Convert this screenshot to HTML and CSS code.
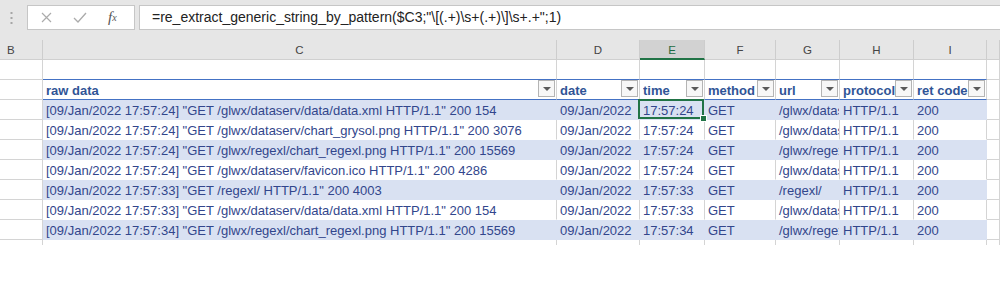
FILE: index.html
```html
<!DOCTYPE html>
<html lang="en">
<head>
    <meta charset="UTF-8">
    <title>Book1 - Excel</title>
    <link rel="stylesheet" href="styles.css">
</head>
<body>
    <div class="formula-bar">
        <div class="grip">
            <svg width="3" height="12" viewBox="0 0 3 12"><rect x="0.5" y="0" width="2" height="2" fill="#a6a6a6"/><rect x="0.5" y="5" width="2" height="2" fill="#a6a6a6"/><rect x="0.5" y="10" width="2" height="2" fill="#a6a6a6"/></svg>
        </div>
        <div class="fx-box">
            <span class="btn cancel"><svg width="11" height="11" viewBox="0 0 11 11"><path d="M1 1 L10 10 M10 1 L1 10" stroke="#ababab" stroke-width="1.2" fill="none"/></svg></span>
            <span class="btn enter"><svg width="14" height="11" viewBox="0 0 14 11"><path d="M1 6 L5 10 L13 1" stroke="#ababab" stroke-width="1.3" fill="none"/></svg></span>
            <span class="btn fx"><i>f</i><sub>x</sub></span>
        </div>
        <div class="formula">=re_extract_generic_string_by_pattern($C3;"\[(.+)\s+(.+)\]\s+.+";1)</div>
    </div>

    <div class="sheet">
        <div class="row col-heads">
            <div class="cell head-b">B</div>
            <div class="cell">C</div>
            <div class="cell">D</div>
            <div class="cell selected-col">E</div>
            <div class="cell">F</div>
            <div class="cell">G</div>
            <div class="cell">H</div>
            <div class="cell">I</div>
            <div class="cell"></div>
        </div>

        <div class="row above-table">
            <div class="cell"></div>
            <div class="cell"></div>
            <div class="cell"></div>
            <div class="cell"></div>
            <div class="cell"></div>
            <div class="cell"></div>
            <div class="cell"></div>
            <div class="cell"></div>
            <div class="cell"></div>
        </div>

        <div class="row table-head">
            <div class="cell"></div>
            <div class="cell th"><span class="label">raw data</span><span class="filter"></span></div>
            <div class="cell th"><span class="label">date</span><span class="filter"></span></div>
            <div class="cell th"><span class="label">time</span><span class="filter"></span></div>
            <div class="cell th"><span class="label">method</span><span class="filter"></span></div>
            <div class="cell th"><span class="label">url</span><span class="filter"></span></div>
            <div class="cell th"><span class="label">protocol</span><span class="filter"></span></div>
            <div class="cell th"><span class="label">ret code</span><span class="filter"></span></div>
            <div class="cell"></div>
        </div>

        <div class="row band">
            <div class="cell"></div>
            <div class="cell td">[09/Jan/2022 17:57:24] "GET /glwx/dataserv/data/data.xml HTTP/1.1" 200 154</div>
            <div class="cell td">09/Jan/2022</div>
            <div class="cell td active">17:57:24<span class="fill-handle"></span></div>
            <div class="cell td">GET</div>
            <div class="cell td">/glwx/dataserv/data/data.xml</div>
            <div class="cell td">HTTP/1.1</div>
            <div class="cell td">200</div>
            <div class="cell"></div>
        </div>

        <div class="row">
            <div class="cell"></div>
            <div class="cell td">[09/Jan/2022 17:57:24] "GET /glwx/dataserv/chart_grysol.png HTTP/1.1" 200 3076</div>
            <div class="cell td">09/Jan/2022</div>
            <div class="cell td">17:57:24</div>
            <div class="cell td">GET</div>
            <div class="cell td">/glwx/dataserv/chart_grysol.png</div>
            <div class="cell td">HTTP/1.1</div>
            <div class="cell td">200</div>
            <div class="cell"></div>
        </div>

        <div class="row band">
            <div class="cell"></div>
            <div class="cell td">[09/Jan/2022 17:57:24] "GET /glwx/regexl/chart_regexl.png HTTP/1.1" 200 15569</div>
            <div class="cell td">09/Jan/2022</div>
            <div class="cell td">17:57:24</div>
            <div class="cell td">GET</div>
            <div class="cell td">/glwx/regexl/chart_regexl.png</div>
            <div class="cell td">HTTP/1.1</div>
            <div class="cell td">200</div>
            <div class="cell"></div>
        </div>

        <div class="row">
            <div class="cell"></div>
            <div class="cell td">[09/Jan/2022 17:57:24] "GET /glwx/dataserv/favicon.ico HTTP/1.1" 200 4286</div>
            <div class="cell td">09/Jan/2022</div>
            <div class="cell td">17:57:24</div>
            <div class="cell td">GET</div>
            <div class="cell td">/glwx/dataserv/favicon.ico</div>
            <div class="cell td">HTTP/1.1</div>
            <div class="cell td">200</div>
            <div class="cell"></div>
        </div>

        <div class="row band">
            <div class="cell"></div>
            <div class="cell td">[09/Jan/2022 17:57:33] "GET /regexl/ HTTP/1.1" 200 4003</div>
            <div class="cell td">09/Jan/2022</div>
            <div class="cell td">17:57:33</div>
            <div class="cell td">GET</div>
            <div class="cell td">/regexl/</div>
            <div class="cell td">HTTP/1.1</div>
            <div class="cell td">200</div>
            <div class="cell"></div>
        </div>

        <div class="row">
            <div class="cell"></div>
            <div class="cell td">[09/Jan/2022 17:57:33] "GET /glwx/dataserv/data/data.xml HTTP/1.1" 200 154</div>
            <div class="cell td">09/Jan/2022</div>
            <div class="cell td">17:57:33</div>
            <div class="cell td">GET</div>
            <div class="cell td">/glwx/dataserv/data/data.xml</div>
            <div class="cell td">HTTP/1.1</div>
            <div class="cell td">200</div>
            <div class="cell"></div>
        </div>

        <div class="row band">
            <div class="cell"></div>
            <div class="cell td">[09/Jan/2022 17:57:34] "GET /glwx/regexl/chart_regexl.png HTTP/1.1" 200 15569</div>
            <div class="cell td">09/Jan/2022</div>
            <div class="cell td">17:57:34</div>
            <div class="cell td">GET</div>
            <div class="cell td">/glwx/regexl/chart_regexl.png</div>
            <div class="cell td">HTTP/1.1</div>
            <div class="cell td">200</div>
            <div class="cell"></div>
        </div>

        <div class="row stub">
            <div class="cell"></div>
            <div class="cell"></div>
            <div class="cell"></div>
            <div class="cell"></div>
            <div class="cell"></div>
            <div class="cell"></div>
            <div class="cell"></div>
            <div class="cell"></div>
            <div class="cell"></div>
        </div>
    </div>
</body>
</html>
```

FILE: styles.css
```css
body {
    margin: 0;
    width: 1000px;
    height: 292px;
    overflow: hidden;
    background: #fff;
    font-family: "Liberation Sans", Arial, sans-serif;
}

/* formula bar */
.formula-bar {
    height: 40px;
    padding-top: 5px;
    box-sizing: border-box;
    background: #e6e6e6;
    display: flex;
    align-items: flex-start;
}
.grip {
    width: 27px;
    height: 25px;
    padding-left: 10px;
    box-sizing: border-box;
    display: flex;
    align-items: center;
}
.fx-box {
    width: 108px;
    height: 25px;
    box-sizing: border-box;
    background: #fff;
    border: 1px solid #c6c6c6;
    display: flex;
    align-items: center;
}
.btn {
    display: flex;
    align-items: center;
    justify-content: center;
}
.cancel {
    width: 14px;
    margin-left: 11px;
}
.enter {
    width: 16px;
    margin-left: 19px;
}
.fx {
    margin-left: 20px;
    font-family: "Liberation Serif", "Times New Roman", serif;
    font-size: 15px;
    color: #555;
}
.fx sub {
    font-size: 10px;
    font-style: italic;
    vertical-align: -1px;
}
.formula {
    flex: 1;
    height: 25px;
    margin-left: 4px;
    padding-left: 12px;
    box-sizing: border-box;
    background: #fff;
    border: 1px solid #c6c6c6;
    border-right: none;
    font-size: 14px;
    line-height: 23px;
    color: #222;
    white-space: nowrap;
}

/* grid */
.row {
    display: grid;
    grid-template-columns: 43px 514px 83px 65px 71px 64px 74px 73px 1fr;
    height: 20px;
}
.cell {
    box-sizing: border-box;
    height: 20px;
    border-right: 1px solid #d4d4d4;
    border-bottom: 1px solid #d4d4d4;
    white-space: nowrap;
    overflow: hidden;
}

.col-heads .cell {
    background: #e6e6e6;
    border-right-color: #cdcdcd;
    border-bottom-color: #d0d0d0;
    text-align: center;
    font-size: 11.5px;
    line-height: 21px;
    color: #444;
}
.col-heads .head-b {
    text-align: left;
    padding-left: 7px;
}
.col-heads .selected-col {
    background: #d2d2d2;
    border-bottom: 2px solid #217346;
    color: #1e6b41;
}

.above-table .cell:nth-child(n+2):nth-child(-n+8) {
    border-bottom-color: #4472c4;
}

.table-head .th {
    display: flex;
    align-items: flex-start;
    padding-left: 3px;
    border-bottom-color: #4472c4;
    font-weight: bold;
    font-size: 13px;
    line-height: 22px;
    color: #305496;
}
.th .label {
    flex: 1;
    overflow: hidden;
}
.filter {
    flex-shrink: 0;
    width: 17px;
    height: 17px;
    margin: 0 1px 0 0;
    box-sizing: border-box;
    border: 1px solid #b4b4b4;
    background: #f7f7f7;
    display: flex;
    align-items: center;
    justify-content: center;
}
.filter::after {
    content: "";
    border-left: 4px solid transparent;
    border-right: 4px solid transparent;
    border-top: 4px solid #5a5a5a;
}

.td {
    padding-left: 3px;
    font-size: 13px;
    line-height: 22px;
    color: #32468c;
    border-bottom-color: transparent;
}
.band .td {
    background: #d9e1f2;
    border-right-color: transparent;
}

/* selected cell E3 */
.active {
    position: relative;
    overflow: visible;
}
.active::after {
    content: "";
    position: absolute;
    top: -1px;
    left: -2px;
    right: 0;
    bottom: 0;
    border: 2px solid #217346;
}
.fill-handle {
    position: absolute;
    right: -3px;
    bottom: -3px;
    width: 5px;
    height: 5px;
    background: #217346;
    border: 1px solid #fff;
    z-index: 1;
}

.stub {
    height: 5px;
}
.stub .cell {
    height: 5px;
    border-bottom: none;
}
```
